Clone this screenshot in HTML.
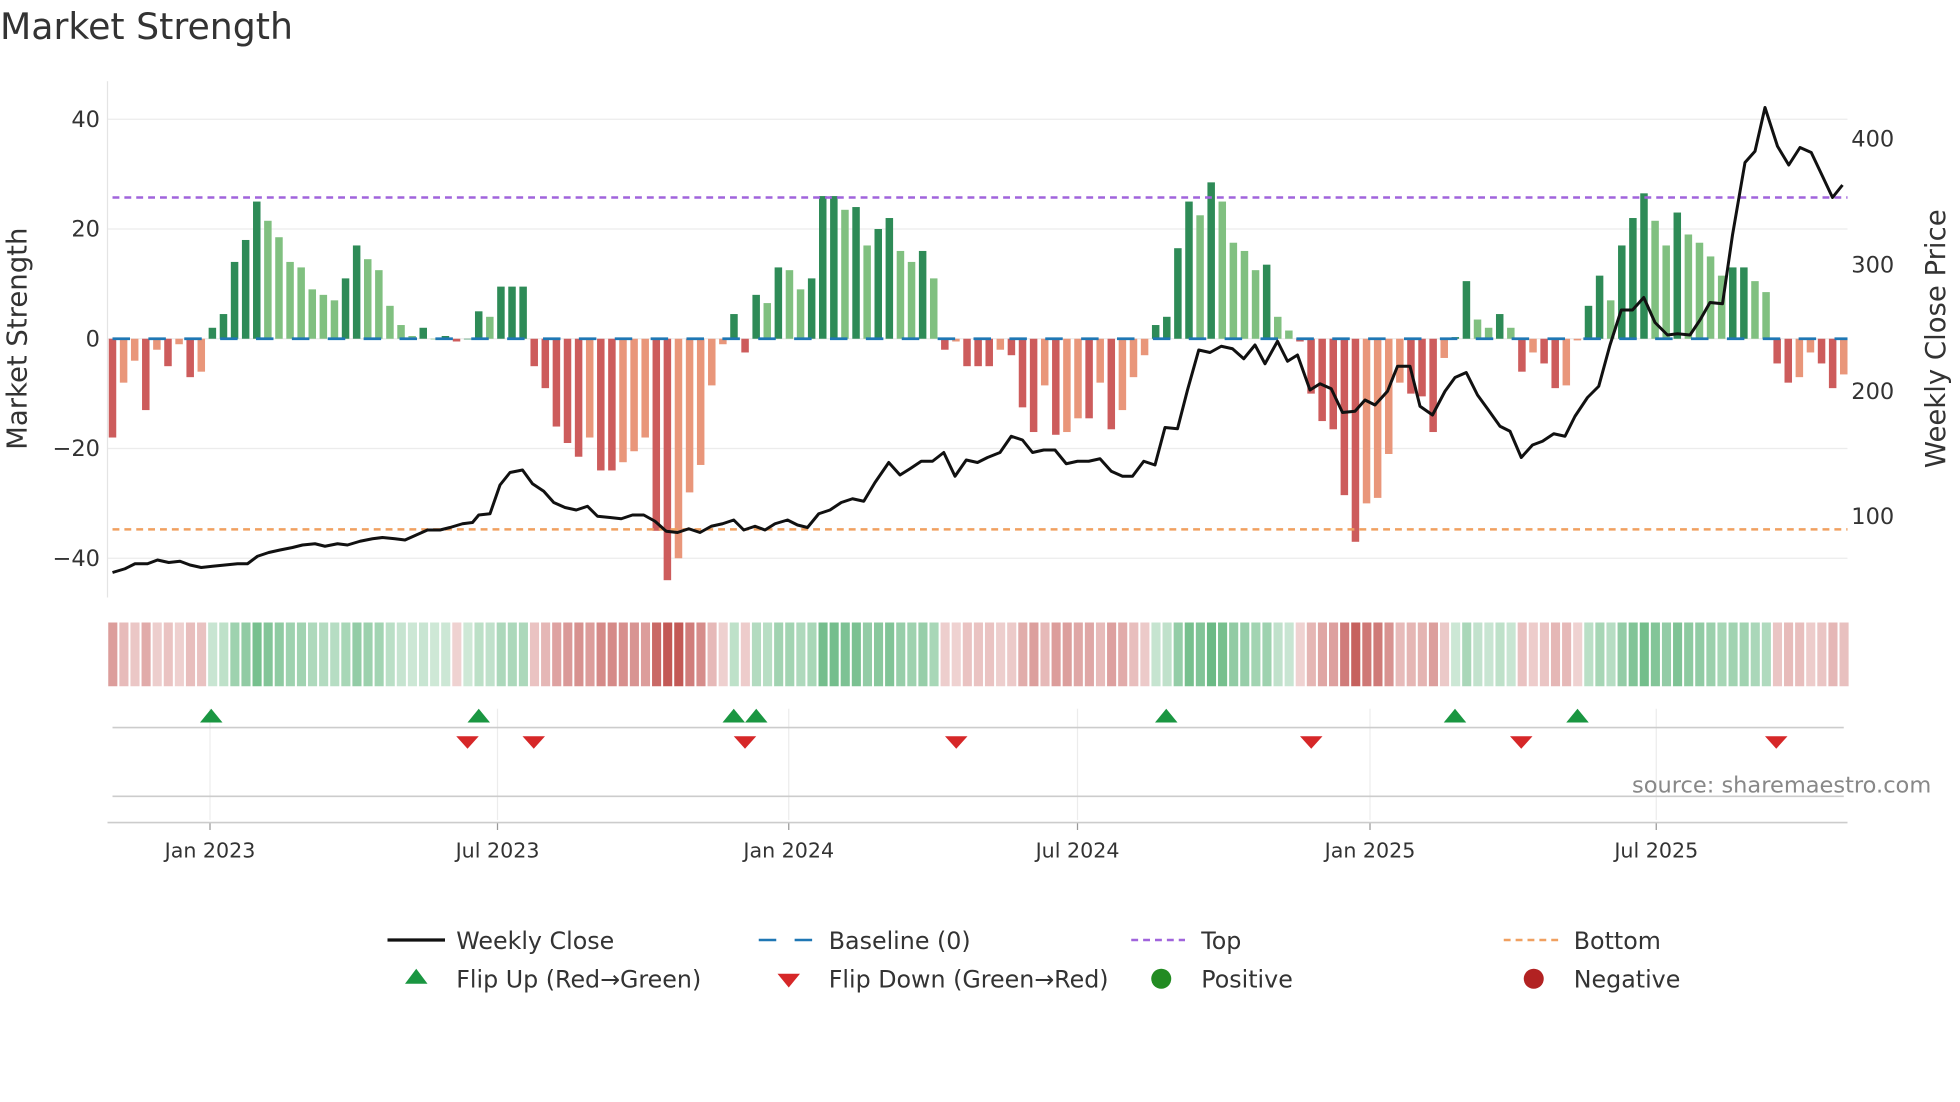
<!DOCTYPE html>
<html><head><meta charset="utf-8"><style>
html,body{margin:0;padding:0;background:#fff;width:1960px;height:1102px;overflow:hidden}
svg{display:block}
text{font-family:"DejaVu Sans","Liberation Sans",sans-serif;fill:#333}
</style></head><body>
<svg id="s" width="1960" height="1102" viewBox="0 0 1568 881.6" preserveAspectRatio="none" xmlns="http://www.w3.org/2000/svg">
<text x="0" y="31" font-size="29" fill="#333">Market Strength</text>
<g id="grid"></g>
<g id="bars"></g>
<g id="heat"></g>
<g id="ann"></g>
</svg>
<script>
var NS="http://www.w3.org/2000/svg",S=document.getElementById('s');
function el(t,a,p){var e=document.createElementNS(NS,t);for(var k in a)e.setAttribute(k,a[k]);(p||S).appendChild(e);return e;}
function tx(x,y,s,a,extra){var e=el('text',Object.assign({x:x,y:y,'font-size':a||18},extra||{}));e.textContent=s;return e;}
var V=[-18,-8,-4,-13,-2,-5,-1,-7,-6,2,4.5,14,18,25,21.5,18.5,14,13,9,8,7,11,17,14.5,12.5,6,2.5,0.5,2,0,0.5,-0.5,0,5,4,9.5,9.5,9.5,-5,-9,-16,-19,-21.5,-18,-24,-24,-22.5,-20.5,-18,-35,-44,-40,-28,-23,-8.5,-1,4.5,-2.5,8,6.5,13,12.5,9,11,26,26,23.5,24,17,20,22,16,14,16,11,-2,-0.5,-5,-5,-5,-2,-3,-12.5,-17,-8.5,-17.5,-17,-14.5,-14.5,-8,-16.5,-13,-7,-3,
2.5,4,16.5,25,22.5,28.5,25,17.5,16,12.5,13.5,4,1.5,
-0.5,-10,-15,-16.5,-28.5,-37,-30,-29,-21,-8,-10,-10.5,-17,-3.5,
0.3,10.5,3.5,2,4.5,2,
-6,-2.5,-4.5,-9,-8.5,-0.3,
6,11.5,7,17,22,26.5,21.5,17,23,19,17.5,15,11.5,13,13,10.5,8.5,
-4.5,-8,-7,-2.5,-4.5,-9,-6.5];
var n=V.length,x0=90,x1=1475,dx=(x1-x0)/(n-1);
function Y(v){return 271-v*4.39;}
var G=document.getElementById('grid');
[40,20,0,-20,-40].forEach(function(v){el('line',{x1:86,x2:1478,y1:Y(v),y2:Y(v),stroke:'#ececec','stroke-width':1},G);tx(80,Y(v)+6,(v<0?'\u2212':'')+Math.abs(v),18,{'text-anchor':'end'});});
el('line',{x1:86,x2:86,y1:65,y2:478,stroke:'#e4e4e4'},G);
[[400,111],[300,212],[200,313],[100,413]].forEach(function(p){tx(1481,p[1]+6,''+p[0],18);});
var dates=[[168,'Jan 2023'],[398,'Jul 2023'],[631,'Jan 2024'],[862,'Jul 2024'],[1096,'Jan 2025'],[1325,'Jul 2025']];
dates.forEach(function(d){el('line',{x1:d[0],x2:d[0],y1:567,y2:656,stroke:'#ececec'},G);el('line',{x1:d[0],x2:d[0],y1:658,y2:664,stroke:'#999'},G);tx(d[0],686,d[1],16.5,{'text-anchor':'middle'});});
el('line',{x1:90,x2:1475,y1:582,y2:582,stroke:'#ccc','stroke-width':1.3},G);
el('line',{x1:90,x2:1475,y1:637,y2:637,stroke:'#ccc','stroke-width':1.3},G);
el('line',{x1:86,x2:1478,y1:658,y2:658,stroke:'#ccc','stroke-width':1.3},G);
tx(0,0,'Market Strength',22,{transform:'translate(21,271) rotate(-90)','text-anchor':'middle'});
tx(0,0,'Weekly Close Price',22,{transform:'translate(1556,271) rotate(-90)','text-anchor':'middle'});
var B=document.getElementById('bars');
for(var i=0;i<n;i++){var v=V[i],p=i?V[i-1]:0,c;
 if(v>=0)c=(v>=p)?'#2e8b57':'#80c080';else c=(v<=p)?'#cd5c5c':'#e9967a';
 var y=Y(v),h=Math.abs(v)*4.39;el('rect',{x:x0+i*dx-3,y:Math.min(y,271),width:6,height:Math.max(h,0.5),fill:c},B);}
el('line',{x1:90,x2:1478,y1:158,y2:158,stroke:'#a064dc','stroke-width':2,'stroke-dasharray':'5.5 4'},B);
el('line',{x1:90,x2:1478,y1:423.5,y2:423.5,stroke:'#f0a060','stroke-width':2,'stroke-dasharray':'5.5 4'},B);
el('line',{x1:90,x2:1478,y1:271,y2:271,stroke:'#1f77b4','stroke-width':2.2,'stroke-dasharray':'14 14.7'},B);
var P=[[90,458],[100,455],[108,451],[118,451],[126,448],[135,450],[144,449],[152,452],[161,454],[170,453],[180,452],[190,451],[198,451],[206,445],[215,442],[224,440],[234,438],[242,436],[252,435],[260,437],[270,435],[278,436],[288,433],[298,431],[306,430],[316,431],[324,432],[333,428],[342,424],[352,424],[360,422],[370,419],[378,418],[383,412],[392,411],[400,388],[408,378],[418,376],[426,387],[435,393],[443,402],[452,406],[461,408],[470,405],[478,413],[488,414],[497,415],[506,412],[515,412],[524,417],[533,425],[542,426],[551,423],[560,426],[569,421],[578,419],[587,416],[595,424],[604,421],[612,424],[620,419],[630,416],[638,420],[646,422],[655,411],[664,408],[673,402],[682,399],[691,401],[700,386],[711,370],[720,380],[728,375],[737,369],[746,369],[755,362],[764,381],[773,368],[782,370],[790,366],[800,362],[809,349],[818,352],[826,362],[835,360],[844,360],[853,371],[862,369],[871,369],[880,367],[889,377],[898,381],[906,381],[915,369],[924,372],[932,342],[942,343],[950,312],[959,280],[968,282],[977,277],[986,279],[995,287],[1004,276],[1012,291],[1022,273],[1030,289],[1038,284],[1048,312],[1056,307],[1065,311],[1074,330],[1084,329],[1092,320],[1100,324],[1110,313],[1118,293],[1128,293],[1136,325],[1146,332],[1156,313],[1164,302],[1173,298],[1182,316],[1190,327],[1200,341],[1208,345],[1217,366],[1226,356],[1234,353],[1243,347],[1252,349],[1260,333],[1270,318],[1279,309],[1288,276],[1297,248],[1306,248],[1315,238],[1324,258],[1334,268],[1342,267],[1352,268],[1360,256],[1368,242],[1378,243],[1386,188],[1396,130],[1404,121],[1412,86],[1422,117],[1431,132],[1440,118],[1449,122],[1458,141],[1466,158],[1474,148]];
el('polyline',{points:P.map(function(p){return p.join(',')}).join(' '),fill:'none',stroke:'#111','stroke-width':2.4,'stroke-linejoin':'round'},B);
var H=document.getElementById('heat');
for(var i=0;i<n;i++){var v=V[i],a=0.25+0.7*Math.min(Math.abs(v)/40,1);
 el('rect',{x:x0+i*dx-3.4,y:498,width:dx-1.6,height:51,fill:v>=0?'#3aa35c':'#c0504d','fill-opacity':a.toFixed(2)},H);}
var A=document.getElementById('ann');
[169,383,587,605,933,1164,1262].forEach(function(x){el('polygon',{points:(x-9)+',578 '+(x+9)+',578 '+x+',567',fill:'#1a9641'},A);});
[374,427,596,765,1049,1217,1421].forEach(function(x){el('polygon',{points:(x-9)+',589 '+(x+9)+',589 '+x+',599',fill:'#d62728'},A);});
tx(1545,634,'source: sharemaestro.com',18,{'text-anchor':'end',style:'fill:#888'});
el('line',{x1:310,x2:356,y1:752,y2:752,stroke:'#111','stroke-width':2.6},A);
el('line',{x1:607,x2:650,y1:752,y2:752,stroke:'#1f77b4','stroke-width':2,'stroke-dasharray':'14 14.7'},A);
el('line',{x1:905,x2:948,y1:752,y2:752,stroke:'#a064dc','stroke-width':2,'stroke-dasharray':'5.5 4'},A);
el('line',{x1:1203,x2:1247,y1:752,y2:752,stroke:'#f0a060','stroke-width':2,'stroke-dasharray':'5.5 4'},A);
tx(365,759,'Weekly Close',19);tx(663,759,'Baseline (0)',19);tx(961,759,'Top',19);tx(1259,759,'Bottom',19);
el('polygon',{points:'324,787 342,787 333,775',fill:'#1a9641'},A);
el('polygon',{points:'622,779 640,779 631,790',fill:'#d62728'},A);
el('circle',{cx:929,cy:783,r:8,fill:'#228b22'},A);
el('circle',{cx:1227,cy:783,r:8,fill:'#b22222'},A);
tx(365,790,'Flip Up (Red\u2192Green)',19);tx(663,790,'Flip Down (Green\u2192Red)',19);tx(961,790,'Positive',19);tx(1259,790,'Negative',19);
</script>
</body></html>
